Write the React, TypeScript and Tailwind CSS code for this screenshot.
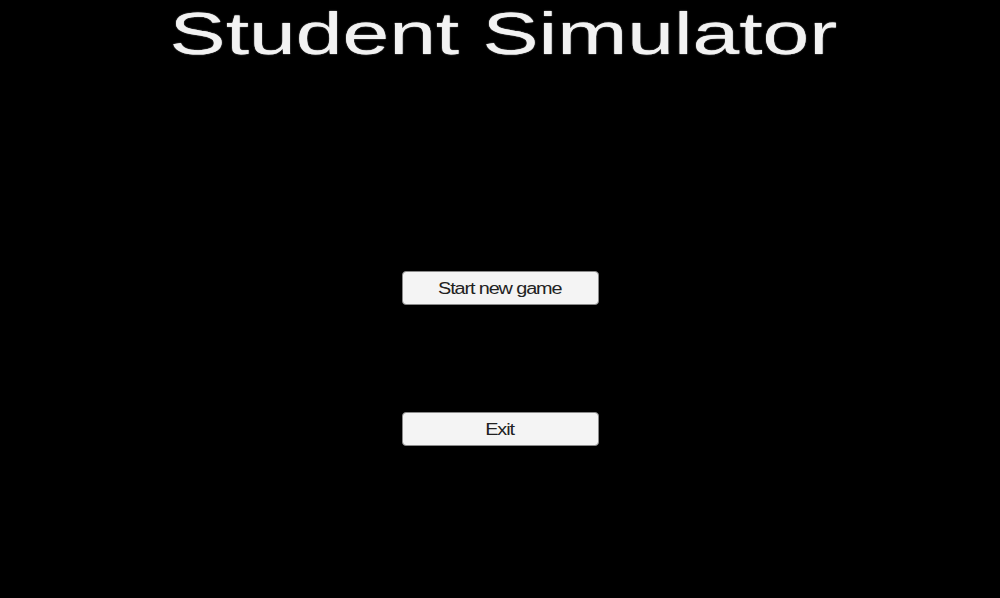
export default function App() {
  const btn =
    "flex h-[34px] w-[197px] items-center justify-center rounded-[4px] border border-[#8a8a8a] bg-[#f4f4f4] text-[#222222]";
  const label = "scale-x-[1.24] pt-px text-[16px] leading-[16px] tracking-[-0.9px]";
  return (
    <div
      className="flex h-[598px] w-full flex-col items-center bg-black"
      style={{ fontFamily: '"Liberation Sans", Arial, sans-serif' }}
    >
      <h1 className="ml-[6px] mt-1 origin-center scale-x-[1.4] text-[60px] leading-[60px] font-normal text-[#f2f2f2] [text-shadow:0_0_1px_#ffffff]">
        Student Simulator
      </h1>
      <button className={`${btn} mt-[207px]`}>
        <span className={label}>Start new game</span>
      </button>
      <button className={`${btn} mt-[107px]`}>
        <span className={label}>Exit</span>
      </button>
    </div>
  );
}
